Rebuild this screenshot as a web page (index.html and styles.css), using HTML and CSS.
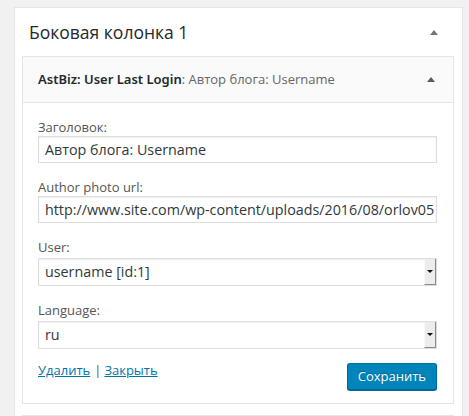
FILE: index.html
```html
<!DOCTYPE html>
<html lang="ru">
<head>
<meta charset="utf-8">
<title>Боковая колонка 1</title>
<link rel="stylesheet" href="styles.css">
</head>
<body>
<div class="page">
  <div class="sidebar">
    <div class="sidebar-name">
      <h2 class="sidebar-title">Боковая колонка 1</h2>
      <span class="toggle"></span>
    </div>
    <div class="widgets">
      <div class="widget">
        <div class="widget-top">
          <h3 class="widget-title"><strong class="widget-name">AstBiz: User Last Login</strong><span class="in-title">: Автор блога: Username</span></h3>
          <span class="toggle toggle-inner"></span>
        </div>
        <div class="widget-inside">
          <div class="field">
            <label class="label">Заголовок:</label>
            <div class="input">Автор блога: Username</div>
          </div>
          <div class="field">
            <label class="label">Author photo url:</label>
            <div class="input">http://www.site.com/wp-content/uploads/2016/08/orlov05</div>
          </div>
          <div class="field field-select">
            <label class="label">User:</label>
            <div class="select"><span class="select-text">username [id:1]</span><span class="select-arrow"><span class="arrow-tri"></span></span></div>
          </div>
          <div class="field field-select">
            <label class="label">Language:</label>
            <div class="select"><span class="select-text">ru</span><span class="select-arrow"><span class="arrow-tri"></span></span></div>
          </div>
          <div class="controls">
            <div class="links"><a class="link" href="#">Удалить</a><span class="sep">|</span><a class="link" href="#">Закрыть</a></div>
            <button class="button">Сохранить</button>
          </div>
        </div>
      </div>
      <div class="widget widget-next"></div>
    </div>
  </div>
</div>
</body>
</html>
```
FILE: styles.css
```css
html, body {
  margin: 0;
  padding: 0;
  background: #f1f1f1;
  height: 100%;
  overflow: hidden;
}
body {
  font-family: "Open Sans", "Noto Sans", sans-serif;
  font-size: 13px;
  color: #444;
}
.page {
  padding: 7px 6px 0 14px;
  height: 100%;
  box-sizing: border-box;
}
.sidebar {
  background: #fff;
  border: 1px solid #e5e5e5;
  border-bottom: none;
  height: 100%;
  box-sizing: border-box;
  overflow: hidden;
}
.sidebar-name {
  display: flex;
  align-items: center;
  justify-content: space-between;
  height: 48px;
  padding: 0 24px 0 14px;
}
.sidebar-title {
  margin: 0;
  font-size: 17.5px;
  font-weight: 400;
  color: #23282d;
  line-height: 1;
  padding-top: 2px;
}
.toggle {
  width: 0;
  height: 0;
  border-left: 4px solid transparent;
  border-right: 4px solid transparent;
  border-bottom: 5px solid #72777c;
}
.widgets {
  padding: 0 8px 0 7px;
}
.widget {
  border: 1px solid #e5e5e5;
  background: #fff;
}
.widget-top {
  display: flex;
  align-items: center;
  justify-content: space-between;
  height: 45px;
  background: #fafafa;
  padding: 0 18px 0 15px;
}
.widget-title {
  margin: 0;
  font-size: 13px;
  font-weight: 400;
  color: #23282d;
  line-height: 1;
}
.widget-name {
  font-family: "Noto Sans", "Open Sans", sans-serif;
  font-weight: 600;
}
.in-title {
  font-weight: 400;
  color: #666;
}
.toggle-inner {
  border-bottom-color: #555d66;
}
.widget-inside {
  border-top: 1px solid #e5e5e5;
  padding: 15px 16px 13px 15px;
}
.field {
  margin-bottom: 15px;
}
.label {
  display: block;
  line-height: 18px;
  color: #555;
}
.field-select .label {
  margin-bottom: 2px;
}
.input {
  height: 27px;
  box-sizing: border-box;
  border: 1px solid #ddd;
  box-shadow: inset 0 1px 2px rgba(0,0,0,.07);
  padding: 0 6px;
  font-size: 14.3px;
  line-height: 25px;
  color: #32373c;
  white-space: nowrap;
  overflow: hidden;
}
.select {
  display: flex;
  height: 28px;
  box-sizing: border-box;
  border: 1px solid #ddd;
  box-shadow: inset 0 1px 2px rgba(0,0,0,.07);
  font-size: 14.3px;
  color: #32373c;
}
.select-text {
  flex: 1;
  padding: 0 6px;
  line-height: 26px;
}
.select-arrow {
  width: 12px;
  box-sizing: border-box;
  background: #ececec;
  border-left: 1px solid #f8f8f8;
  border-right: 1px solid #8a8a8a;
  border-bottom: 1px solid #8a8a8a;
  display: flex;
  align-items: center;
  justify-content: center;
}
.arrow-tri {
  width: 0;
  height: 0;
  border-left: 3px solid transparent;
  border-right: 3px solid transparent;
  border-top: 3px solid #111;
}
.controls {
  display: flex;
  justify-content: space-between;
  align-items: flex-start;
  margin-top: -2px;
}
.links {
  line-height: 16px;
}
.link {
  color: #0073aa;
  text-decoration: underline;
}
.sep {
  color: #555;
  margin: 0 3px 0 4px;
}
.button {
  font-family: "Open Sans", "Noto Sans", sans-serif;
  font-size: 13px;
  color: #fff;
  background: #0085ba;
  border: 1px solid #0073aa;
  border-color: #0073aa #006799 #006799;
  box-shadow: 0 1px 0 #006799;
  border-radius: 3px;
  height: 27px;
  padding: 0 10px;
  margin-top: 1px;
  line-height: 25px;
  text-shadow: 0 -1px 1px #006799;
}
.widget-next {
  margin-top: 11px;
  height: 20px;
}
```
